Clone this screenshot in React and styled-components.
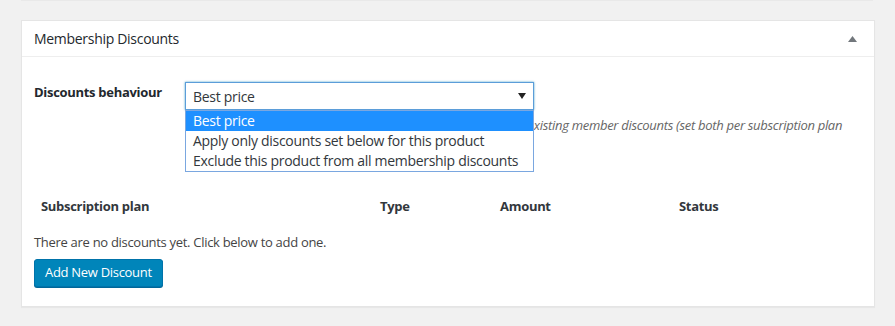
import styled, { createGlobalStyle } from 'styled-components';

const GlobalStyle = createGlobalStyle`
  body {
    margin: 0;
    background: #f1f1f1;
    font-family: "Open Sans", "Noto Sans", sans-serif;
    letter-spacing: -0.3px;
    color: #444;
  }
`;

const options = [
  'Best price',
  'Apply only discounts set below for this product',
  'Exclude this product from all membership discounts',
];

const columns = ['Subscription plan', 'Type', 'Amount', 'Status'];

const App = () => {
  return (
    <>
      <GlobalStyle />
      <Page>
        <PrevBox />
        <Postbox>
          <Header>
            <Title>Membership Discounts</Title>
            <Toggle>
              <svg width="9" height="6" viewBox="0 0 9 6">
                <path d="M0 6 L4.5 0 L9 6 Z" fill="#72777c" />
              </svg>
            </Toggle>
          </Header>
          <Inside>
            <FieldRow>
              <FieldLabel>Discounts behaviour</FieldLabel>
              <FieldBody>
                <SelectBox>
                  <span>Best price</span>
                  <svg width="8" height="6" viewBox="0 0 8 6">
                    <path d="M0 0 L8 0 L4 6 Z" fill="#222" />
                  </svg>
                </SelectBox>
                <Description>
                  Best price: apply the best price between product discounts and existing member discounts (set both per subscription plan
                  and per product)
                </Description>
                <Dropdown>
                  {options.map((o, i) => (
                    <Option key={o} $active={i === 0}>{o}</Option>
                  ))}
                </Dropdown>
              </FieldBody>
            </FieldRow>
            <TableHead>
              {columns.map((c) => (
                <HeadCell key={c}>{c}</HeadCell>
              ))}
            </TableHead>
            <Empty>There are no discounts yet. Click below to add one.</Empty>
            <PrimaryButton>Add New Discount</PrimaryButton>
          </Inside>
        </Postbox>
      </Page>
    </>
  );
};

const Page = styled.div`
  padding: 0 20px 20px 21px;
  width: 854px;
`;

const PrevBox = styled.div`
  height: 1px;
  width: 852px;
  background: #e9e9e9;
  margin-bottom: 19px;
`;

const Postbox = styled.div`
  background: #fff;
  border: 1px solid #e5e5e5;
  box-shadow: 0 1px 1px rgba(0, 0, 0, 0.04);
  box-sizing: border-box;
  width: 854px;
`;

const Header = styled.div`
  display: flex;
  align-items: center;
  justify-content: space-between;
  height: 35px;
  border-bottom: 1px solid #eee;
  padding: 0 12px;
`;

const Title = styled.h2`
  margin: 0;
  font-size: 14px;
  font-weight: 400;
  color: #23282d;
`;

const Toggle = styled.span`
  display: flex;
  margin-right: 5px;
`;

const Inside = styled.div`
  padding: 26px 12px 19px;
`;

const FieldRow = styled.div`
  display: flex;
  align-items: flex-start;
`;

const FieldLabel = styled.div`
  width: 151px;
  font-size: 13px;
  font-weight: 700;
  color: #23282d;
  line-height: 18px;
  flex-shrink: 0;
`;

const FieldBody = styled.div`
  position: relative;
  flex: 1;
`;

const SelectBox = styled.div`
  box-sizing: border-box;
  width: 349px;
  height: 28px;
  border: 1px solid #5b9dd9;
  box-shadow: 0 0 2px rgba(30, 140, 190, 0.8);
  margin-top: -1px;
  display: flex;
  align-items: center;
  justify-content: space-between;
  padding: 0 7px 0 7px;
  font-size: 14px;
  color: #32373c;
`;

const Description = styled.p`
  margin: 5px 0 0;
  max-width: 672px;
  font-size: 13px;
  font-style: italic;
  color: #666;
  line-height: 20px;
`;

const Dropdown = styled.div`
  position: absolute;
  top: 27px;
  left: 0;
  width: 349px;
  box-sizing: border-box;
  background: #fff;
  border: 1px solid #7aa7e0;
`;

const Option = styled.div`
  height: 20px;
  line-height: 20px;
  padding: 0 7px;
  font-size: 14px;
  white-space: nowrap;
  color: ${(p) => (p.$active ? '#fff' : '#32373c')};
  background: ${(p) => (p.$active ? '#1e90ff' : 'transparent')};
`;

const TableHead = styled.div`
  display: grid;
  grid-template-columns: 339px 120px 179px 1fr;
  margin-top: 41px;
  padding-left: 7px;
`;

const HeadCell = styled.div`
  font-size: 13px;
  font-weight: 700;
  color: #32373c;
  line-height: 20px;
`;

const Empty = styled.p`
  margin: 16px 0 0;
  font-size: 13px;
  color: #444;
  line-height: 20px;
`;

const PrimaryButton = styled.button`
  margin-top: 7px;
  height: 28px;
  padding: 0 10px 2px;
  font-family: inherit;
  letter-spacing: inherit;
  font-size: 13px;
  color: #fff;
  background: #0085ba;
  border: 1px solid #0073aa;
  border-radius: 3px;
  box-shadow: 0 1px 0 #006799;
  cursor: pointer;
`;

export default App;
